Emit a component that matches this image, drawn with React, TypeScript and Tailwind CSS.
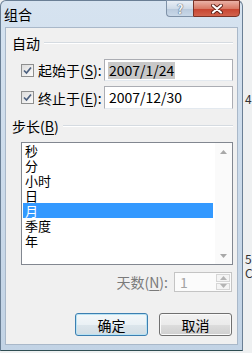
import type { ReactNode } from "react";

const font = "font-['Noto_Sans_CJK_SC',sans-serif]";

function Key({ k }: { k: string }) {
  return (
    <>
      (<span className="underline underline-offset-[2px]">{k}</span>)
    </>
  );
}

function CheckBox() {
  return (
    <div className="w-[13px] h-[13px] shrink-0 border border-[#8e8f8f] bg-[linear-gradient(135deg,#dcdcdc,#fbfbfb)] flex items-center justify-center">
      <svg width="11" height="11" viewBox="0 0 11 11">
        <path d="M2 5.5 L4.5 8 L9 2.5" fill="none" stroke="#4c607f" strokeWidth="1.7" />
      </svg>
    </div>
  );
}

function Header({ children }: { children: ReactNode }) {
  return (
    <div className="flex items-center h-[16px] pl-[6px] pr-[4px]">
      <span className="leading-[16px]">{children}</span>
      <div className="flex-1 ml-[4px] h-[2px] border-t border-[#d5dbe1] border-b border-b-white" />
    </div>
  );
}

function Arrow({ up, color = "#a8a8a8" }: { up?: boolean; color?: string }) {
  return (
    <svg width="7" height="4" viewBox="0 0 7 4">
      <path d={up ? "M0 4 L3.5 0 L7 4 Z" : "M0 0 L3.5 4 L7 0 Z"} fill={color} />
    </svg>
  );
}

const items = ["秒", "分", "小时", "日", "月", "季度", "年"];

export default function App() {
  return (
    <div className={`relative w-[252px] h-[353px] overflow-hidden bg-[#eef0f1] text-[14px] text-black ${font}`}>
      {/* bits of the sheet behind the dialog */}
      <span className="absolute left-[245px] top-[92px] text-[12px] leading-[14px] text-[#333]">4</span>
      <span className="absolute left-[245px] top-[252px] text-[12px] leading-[14px] text-[#333]">5</span>
      <span className="absolute left-[245px] top-[266px] text-[12px] leading-[14px] text-[#333]">C</span>

      <div className="flex flex-col w-[243px] h-[351px] border border-[#6a7f95] border-b-[#2e4d52] rounded-t-[6px] bg-[linear-gradient(#d6e3f0,#c2d3e5)]">
        {/* title bar */}
        <div className="flex items-start h-[26px]">
          <span className="ml-[3px] mt-[5px] leading-[16px]">组合</span>
          <div className="ml-auto mr-[2px] -mt-px flex">
            <div className="w-[27px] h-[17px] flex items-center justify-center border border-[#7f92a8] border-r-0 rounded-bl-[4px] bg-[linear-gradient(#e9eff6,#cfdbe8_50%,#b8c9dc_51%,#c9d8e8)]">
              <span className="text-[13px] leading-[13px] font-bold text-[#eef2f6] [text-shadow:0_0_1px_#44556a,0_0_1px_#44556a]">?</span>
            </div>
            <div className="w-[47px] h-[17px] flex items-center justify-center border border-[#7a3327] rounded-br-[4px] bg-[linear-gradient(#eab2a6,#d97a66_50%,#c7432f_51%,#d2634d)]">
              <svg width="12" height="10" viewBox="0 0 12 10">
                <path d="M2 1.5 L10 8.5 M10 1.5 L2 8.5" stroke="#5e2219" strokeWidth="4" strokeLinecap="round" />
                <path d="M2 1.5 L10 8.5 M10 1.5 L2 8.5" stroke="#ffffff" strokeWidth="2.2" strokeLinecap="round" />
              </svg>
            </div>
          </div>
        </div>

        {/* client area */}
        <div className="flex flex-col ml-[4px] w-[233px] h-[318px] bg-[#f0f0f0] border border-[#a9b8c9]">
          <div className="mt-[7px]">
            <Header>自动</Header>
          </div>

          <div className="flex items-center mt-[8px] h-[22px] pl-[15px]">
            <CheckBox />
            <span className="ml-[4px] leading-[16px]">
              起始于<Key k="S" />:
            </span>
            <div className="ml-auto mr-[4px] w-[129px] h-[22px] border border-[#abadb3] border-b-[#e3e9ef] bg-white flex items-center pl-[3px]">
              <span className="bg-[#c8c8c8] px-[1px] leading-[17px]">2007/1/24</span>
            </div>
          </div>

          <div className="flex items-center mt-[5px] h-[23px] pl-[15px]">
            <CheckBox />
            <span className="ml-[4px] leading-[16px]">
              终止于<Key k="E" />:
            </span>
            <div className="ml-auto mr-[4px] w-[129px] h-[23px] border border-[#abadb3] border-b-[#e3e9ef] bg-white flex items-center pl-[4px]">
              <span className="leading-[17px]">2007/12/30</span>
            </div>
          </div>

          <div className="mt-[9px]">
            <Header>
              步长<Key k="B" />
            </Header>
          </div>

          {/* list */}
          <div className="flex mt-[8px] ml-[15px] w-[212px] h-[123px] border border-[#828790] bg-white">
            <div className="flex-1 flex flex-col text-[13px]">
              {items.map((it) => (
                <div
                  key={it}
                  className={
                    it === "月"
                      ? "h-[15px] leading-[15px] mx-[1px] mr-[2px] pl-[2px] bg-[#3399ff] text-white"
                      : "h-[15px] leading-[15px] pl-[3px]"
                  }
                >
                  {it}
                </div>
              ))}
            </div>
            <div className="w-[17px] flex flex-col justify-between bg-[#fafafa]">
              <div className="h-[17px] flex items-center justify-center">
                <Arrow up />
              </div>
              <div className="h-[17px] flex items-center justify-center">
                <Arrow />
              </div>
            </div>
          </div>

          {/* spin row */}
          <div className="flex items-center justify-end mt-[7px] h-[20px] pr-[5px]">
            <span className="text-[#7a7a7a] leading-[16px] mr-[6px]">
              天数<Key k="N" />:
            </span>
            <div className="w-[58px] h-[20px] flex border border-[#c4c4c4] bg-[#fbfbfb]">
              <span className="flex-1 pl-[5px] leading-[18px] text-[#a3a3a3]">1</span>
              <div className="w-[16px] flex flex-col gap-px p-px">
                <div className="flex-1 flex items-center justify-center border border-[#d6d6d6] bg-[#f4f4f4]">
                  <Arrow up color="#b4b4b4" />
                </div>
                <div className="flex-1 flex items-center justify-center border border-[#d6d6d6] bg-[#f4f4f4]">
                  <Arrow color="#b4b4b4" />
                </div>
              </div>
            </div>
          </div>

          {/* buttons */}
          <div className="flex justify-end gap-[11px] mt-[21px] h-[23px] pr-[5px]">
            <div className="w-[73px] h-[23px] rounded-[3px] border border-[#3c7fb1] shadow-[inset_0_0_0_1px_#b9e2f3] bg-[linear-gradient(#f4f8fa,#eaf1f5_50%,#dce6ec_51%,#d2dde4)] flex items-center justify-center">
              <span className="leading-[16px]">确定</span>
            </div>
            <div className="w-[73px] h-[23px] rounded-[3px] border border-[#707070] shadow-[inset_0_0_0_1px_#fafafa] bg-[linear-gradient(#f2f2f2,#ebebeb_50%,#dddddd_51%,#cfcfcf)] flex items-center justify-center">
              <span className="leading-[16px]">取消</span>
            </div>
          </div>
        </div>
      </div>
    </div>
  );
}
